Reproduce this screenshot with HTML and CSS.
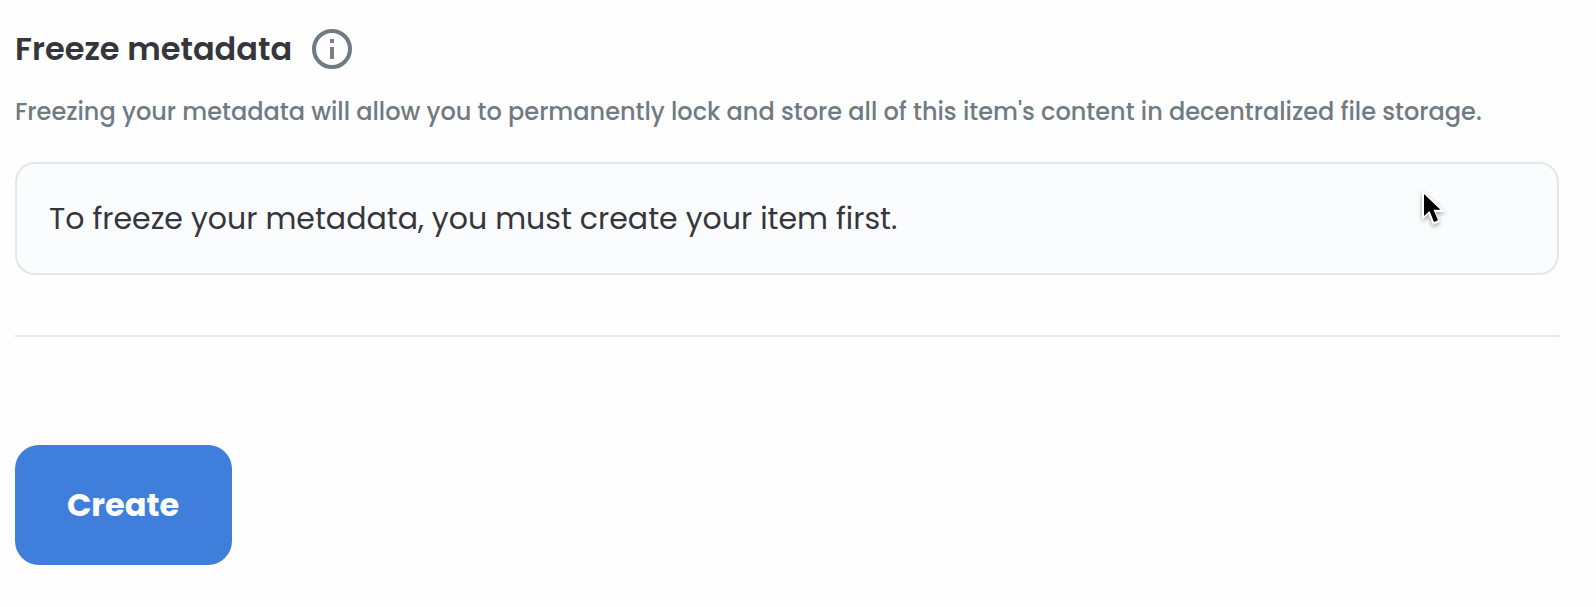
FILE: index.html
```html
<!DOCTYPE html>
<html lang="en">
<head>
<meta charset="utf-8">
<title>Freeze metadata</title>
<link rel="stylesheet" href="styles.css">
</head>
<body>
<main class="form">
  <header class="heading">
    <h2 class="title">Freeze metadata</h2>
    <svg class="info" viewBox="0 0 40 40" aria-label="Info">
      <circle cx="20" cy="20" r="18" fill="none" stroke="currentColor" stroke-width="4"/>
      <path d="M18 10h4v4h-4zM18 18h4v12h-4z" fill="#7a7d82"/>
    </svg>
  </header>
  <p class="description">Freezing your metadata will allow you to permanently lock and store all of this item's content in decentralized file storage.</p>
  <div class="notice">To freeze your metadata, you must create your item first.</div>
  <hr class="divider">
  <button class="create" type="button">Create</button>
</main>
<svg class="cursor" viewBox="0 0 30 44">
  <path d="M4 4v30l6.500-6 4.500 11 7-3-4.500-10H27z" fill="#fff"/>
  <path d="M6 8v22l5.500-5 4.500 11 4-1.700-4.500-10.600H22.500z" fill="#000"/>
</svg>
</body>
</html>
```
FILE: styles.css
```css
* { box-sizing: border-box; }
body {
  margin: 0;
  height: 607px;
  overflow: hidden;
  background: #fefefe;
  font-family: Poppins, Inter, "Open Sans", sans-serif;
  color: #35363c;
}
.form {
  display: flex;
  flex-direction: column;
  align-items: flex-start;
  width: 1559px;
  padding: 24px 0 0 15px;
}
.heading {
  display: flex;
  align-items: center;
  height: 50px;
}
.title {
  width: 297px;
  margin: 0;
  font-size: 32px;
  line-height: 50px;
  font-weight: 600;
  white-space: nowrap;
}
.info {
  width: 40px;
  height: 40px;
  color: #707a83;
}
.description {
  margin: 20px 0 0;
  height: 36px;
  line-height: 36px;
  font-size: 24px;
  font-weight: 500;
  color: #707a83;
  white-space: nowrap;
}
.notice {
  width: 100%;
  height: 113px;
  margin-top: 32px;
  padding-left: 32px;
  border: 2px solid #e5e6ea;
  border-radius: 20px;
  background: #fbfcfe;
  font-size: 30px;
  line-height: 109px;
  white-space: nowrap;
}
.divider {
  width: 100%;
  height: 2px;
  margin: 60px 0 0;
  border: 0;
  background: #e5e6e9;
}
.create {
  width: 217px;
  height: 120px;
  margin-top: 108px;
  padding: 0 1px 0 0;
  border: 0;
  border-radius: 24px;
  background: #3f7fdb;
  color: #fff;
  font: inherit;
  font-size: 32px;
  font-weight: 700;
}
.cursor {
  position: absolute;
  left: 1418px;
  top: 186px;
  width: 30px;
  height: 44px;
  filter: drop-shadow(0 2px 2px rgba(0, 0, 0, .35));
}
```
